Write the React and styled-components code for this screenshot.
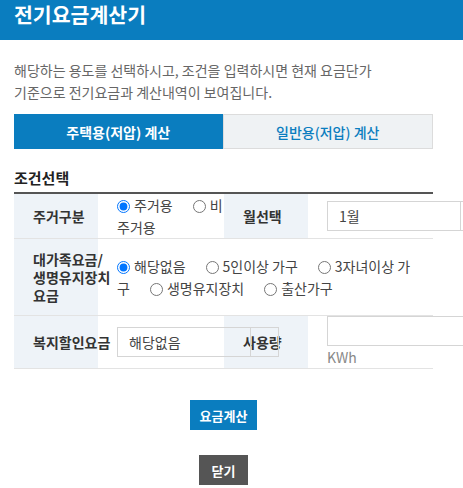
import React from 'react';
import styled, { createGlobalStyle } from 'styled-components';

const Global = createGlobalStyle`
  html, body { margin: 0; padding: 0; overflow-x: hidden; background: #fff; }
  body {
    font-family: "Noto Sans CJK KR", "Noto Sans", sans-serif;
    font-size: 14px;
    color: #333;
  }
`;

const BLUE = '#0a7dbf';

const Header = styled.header`
  height: 40px;
  box-sizing: border-box;
  padding: 0 14px;
  background: ${BLUE};
`;

const Title = styled.h1`
  margin: 0;
  font-size: 20.5px;
  line-height: 29px;
  font-weight: 700;
  color: #fff;
`;

const Content = styled.main`
  padding: 0 30px 0 14px;
`;

const Desc = styled.p`
  margin: 19px 0 11px;
  font-size: 14px;
  line-height: 22px;
  color: #666;
`;

const Tabs = styled.div`
  display: flex;
  height: 35px;
`;

const Tab = styled.button`
  flex: 1;
  box-sizing: border-box;
  margin: 0;
  padding: 0;
  font-family: inherit;
  font-size: 14px;
  font-weight: ${(p) => (p.$active ? 700 : 500)};
  color: ${(p) => (p.$active ? '#fff' : BLUE)};
  background: ${(p) => (p.$active ? BLUE : '#eff2f4')};
  border: ${(p) => (p.$active ? '0' : '1px solid #dcdcdc')};
  cursor: pointer;
`;

const SectionTitle = styled.h2`
  margin: 19px 0 4px;
  font-size: 15px;
  line-height: 20px;
  font-weight: 700;
  color: #222;
`;

const Table = styled.table`
  width: 100%;
  table-layout: fixed;
  border-collapse: collapse;
  border-top: 2px solid #555;
`;

const Row = styled.tr`
  border-bottom: 1px solid #e3e3e3;
`;

const Th = styled.th`
  padding: 11px 0 11px 19px;
  background: #eef3f8;
  text-align: left;
  vertical-align: middle;
  font-size: 14px;
  line-height: 18px;
  font-weight: 700;
  color: #333;
  white-space: nowrap;
`;

const Td = styled.td`
  padding: 0 ${(p) => p.$padRight || 0}px 0 19px;
  vertical-align: middle;
  font-size: 14px;
  line-height: 22px;
  color: #444;
`;

const Option = styled.label`
  margin-right: 20px;
  cursor: pointer;
`;

const Radio = styled.input.attrs({ type: 'radio' })`
  width: 13px;
  height: 13px;
  margin: 0 4px 0 0;
  vertical-align: -2px;
`;

const Select = styled.div`
  position: relative;
  display: flex;
  width: 162px;
  height: 30px;
  box-sizing: border-box;
  border: 1px solid #d5d5d5;
  background: transparent;
  color: #444;
  line-height: 28px;
`;

const SelectValue = styled.span`
  flex: 1;
  padding-left: 11px;
`;

const SelectArrow = styled.span`
  width: 27px;
  border-left: 1px solid #d5d5d5;
`;

const Input = styled.input`
  display: block;
  width: 162px;
  height: 30px;
  box-sizing: border-box;
  margin: 0;
  border: 1px solid #d5d5d5;
  font-family: inherit;
`;

const Unit = styled.div`
  color: #888;
  line-height: 22px;
`;

const Actions = styled.div`
  display: flex;
  flex-direction: column;
  align-items: center;
  gap: 25px;
  margin-top: 31px;
`;

const Button = styled.button`
  height: 30px;
  margin: 0;
  padding: 0 ${(p) => p.$padX}px;
  border: 0;
  background: ${(p) => (p.$primary ? BLUE : '#555')};
  color: #fff;
  font-family: inherit;
  font-size: 13px;
  font-weight: 700;
  cursor: pointer;
`;

export default function App() {
  return (
    <>
      <Global />
      <Header>
        <Title>전기요금계산기</Title>
      </Header>
      <Content>
        <Desc>
          해당하는 용도를 선택하시고, 조건을 입력하시면 현재 요금단가
          <br />
          기준으로 전기요금과 계산내역이 보여집니다.
        </Desc>
        <Tabs>
          <Tab $active>주택용(저압) 계산</Tab>
          <Tab>일반용(저압) 계산</Tab>
        </Tabs>
        <SectionTitle>조건선택</SectionTitle>
        <Table>
          <colgroup>
            <col style={{ width: 84 }} />
            <col style={{ width: 126 }} />
            <col style={{ width: 84 }} />
            <col />
          </colgroup>
          <tbody>
            <Row>
              <Th>주거구분</Th>
              <Td>
                <Option>
                  <Radio name="house" defaultChecked />
                  주거용
                </Option>
                <Option>
                  <Radio name="house" />
                  비 주거용
                </Option>
              </Td>
              <Th>월선택</Th>
              <Td>
                <Select>
                  <SelectValue>1월</SelectValue>
                  <SelectArrow />
                </Select>
              </Td>
            </Row>
            <Row>
              <Th>
                대가족요금/
                <br />
                생명유지장치
                <br />
                요금
              </Th>
              <Td colSpan={3} $padRight={14}>
                <Option>
                  <Radio name="family" defaultChecked />
                  해당없음
                </Option>
                <Option>
                  <Radio name="family" />
                  5인이상 가구
                </Option>
                <Option>
                  <Radio name="family" />
                  3자녀이상 가구
                </Option>
                <Option>
                  <Radio name="family" />
                  생명유지장치
                </Option>
                <Option>
                  <Radio name="family" />
                  출산가구
                </Option>
              </Td>
            </Row>
            <Row>
              <Th>복지할인요금</Th>
              <Td>
                <Select>
                  <SelectValue>해당없음</SelectValue>
                  <SelectArrow />
                </Select>
              </Td>
              <Th>사용량</Th>
              <Td>
                <Input type="text" />
                <Unit>KWh</Unit>
              </Td>
            </Row>
          </tbody>
        </Table>
        <Actions>
          <Button $primary $padX={10}>요금계산</Button>
          <Button $padX={13}>닫기</Button>
        </Actions>
      </Content>
    </>
  );
}
